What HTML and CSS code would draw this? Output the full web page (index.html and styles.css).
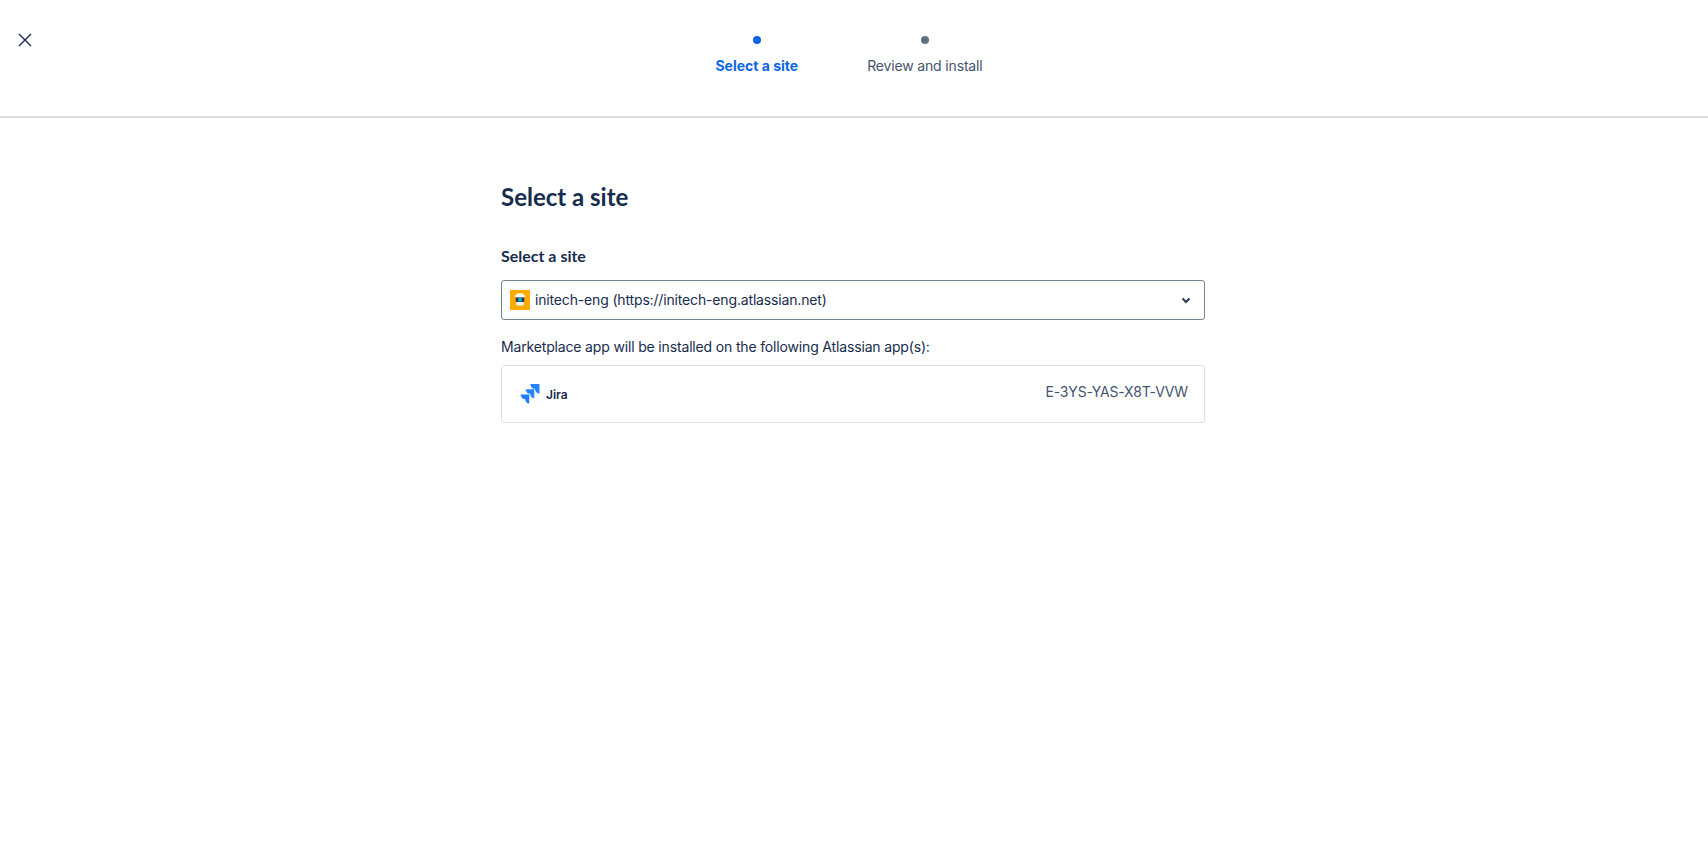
FILE: index.html
```html
<!DOCTYPE html>
<html lang="en">
<head>
    <meta charset="UTF-8">
    <title>Select a site</title>
    <link rel="stylesheet" href="styles.css">
</head>
<body>
    <header class="top-bar">
        <button class="close-button" aria-label="Close">
            <svg width="14" height="14" viewBox="0 0 14 14"><path d="M1 1l12 12M13 1L1 13" stroke="#172b4d" stroke-width="1.4" fill="none"/></svg>
        </button>
        <ol class="steps">
            <li class="step step-active">
                <span class="step-dot"></span>
                <span class="step-label">Select a site</span>
            </li>
            <li class="step">
                <span class="step-dot"></span>
                <span class="step-label">Review and install</span>
            </li>
        </ol>
    </header>

    <main class="content">
        <h1 class="page-title">Select a site</h1>
        <label class="field-label">Select a site</label>
        <div class="site-select">
            <svg class="site-icon" width="20" height="20" viewBox="0 0 20 20">
                <rect width="20" height="20" fill="#ffab00"/>
                <path d="M6.500 3.500h7v1.500h-7z" fill="#fff"/>
                <path d="M5 5h10v2.500H5z" fill="#f4f5f7"/>
                <path d="M5.500 7.500h9l-.5 4.500H6z" fill="#253858"/>
                <circle cx="10" cy="9.700" r="2" fill="#00b8d9"/>
                <path d="M6 12h8l-.4 3.500H6.400z" fill="#f4f5f7"/>
            </svg>
            <span class="site-name">initech-eng (https://initech-eng.atlassian.net)</span>
            <svg class="chevron" width="10" height="7" viewBox="0 0 10 7"><path d="M1.500 1.500L5 5l3.500-3.500" stroke="#253858" stroke-width="2" fill="none"/></svg>
        </div>
        <p class="install-note">Marketplace app will be installed on the following Atlassian app(s):</p>
        <div class="app-card">
            <div class="app-info">
                <svg width="20" height="20" viewBox="0 0 20 20">
                    <path d="M10.500 0h9v9.500c-2.500 0-4.500-2-4.500-4.500h-.500c-2.300 0-4-2.200-4-5z" fill="#2684ff"/>
                    <path d="M5.500 5h9v9.500c-2.500 0-4.500-2-4.500-4.500h-.500c-2.300 0-4-2.200-4-5z" fill="#2684ff" stroke="#fff" stroke-width=".5"/>
                    <path d="M.5 10.200h9v9.500c-2.500 0-4.500-2-4.500-4.500h-.500c-2.300 0-4-2.200-4-5z" fill="#1f7cf7" stroke="#fff" stroke-width=".5"/>
                </svg>
                <span class="app-name">Jira</span>
            </div>
            <span class="app-key">E-3YS-YAS-X8T-VVW</span>
        </div>
    </main>
</body>
</html>
```

FILE: styles.css
```css
body {
    margin: 0;
    background-color: white;
    color: #172b4d;
    font-family: Inter, "Liberation Sans", sans-serif;
    font-size: 14px;
    line-height: 20px;
    letter-spacing: -0.16px;
}

.top-bar {
    height: 116px;
    padding-right: 10px;
    display: flex;
    justify-content: center;
    border-bottom: 2px solid #dcdde1;
    position: relative;
}

.close-button {
    position: absolute;
    top: 33px;
    left: 18px;
    width: 14px;
    height: 14px;
    padding: 0;
    border: none;
    background: none;
    display: flex;
}

.steps {
    list-style: none;
    margin: 0;
    padding: 36px 0 0;
    display: flex;
    gap: 69px;
}

.step {
    display: flex;
    flex-direction: column;
    align-items: center;
    gap: 12px;
    color: #44546f;
}

.step-dot {
    width: 8px;
    height: 8px;
    border-radius: 50%;
    background-color: #626f86;
}

.step-active {
    color: #0c66e4;
    font-weight: 700;
    letter-spacing: 0;
}

.step-active .step-dot {
    background-color: #0c66e4;
}

.content {
    width: 704px;
    margin: 0 auto;
    padding-top: 65px;
    transform: translateX(-1px);
}

.page-title {
    margin: 0;
    font-family: Lato, Inter, sans-serif;
    font-size: 24px;
    line-height: 28px;
    font-weight: 700;
    letter-spacing: 0;
}

.field-label {
    display: block;
    margin-top: 35px;
    font-family: Lato, Inter, sans-serif;
    font-size: 16px;
    font-weight: 700;
    letter-spacing: 0;
}

.site-select {
    margin-top: 14px;
    height: 38px;
    padding: 0 13px 0 8px;
    display: flex;
    align-items: center;
    gap: 5px;
    border: 1px solid #758195;
    border-radius: 3px;
}

.site-name {
    flex: 1;
}

.install-note {
    margin: 17px 0 0;
}

.app-card {
    margin-top: 8px;
    height: 56px;
    padding: 0 16px 0 18px;
    display: flex;
    align-items: center;
    justify-content: space-between;
    border: 1px solid #dcdfe4;
    border-radius: 3px;
}

.app-info {
    display: flex;
    align-items: center;
    gap: 6px;
}

.app-name {
    font-size: 12px;
    font-weight: 600;
    letter-spacing: 0;
    margin-top: 1px;
}

.app-key {
    color: #44546f;
    margin-top: -5px;
}
```
